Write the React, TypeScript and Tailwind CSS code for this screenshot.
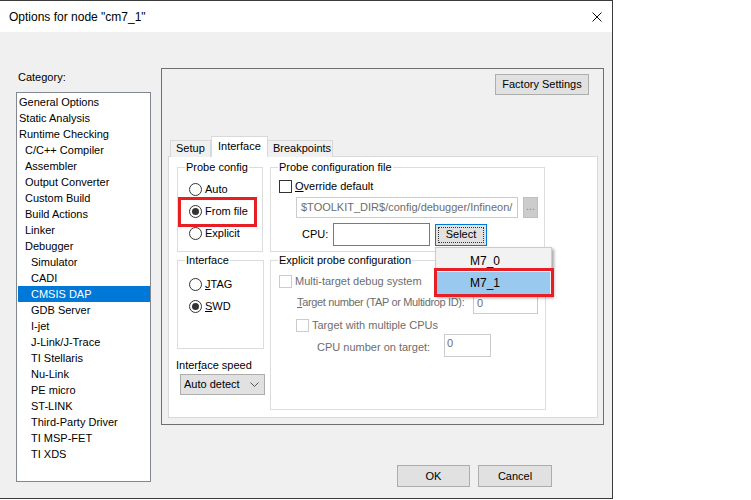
import type { ReactNode } from 'react'

const categories: [string, number][] = [
  ['General Options', 0],
  ['Static Analysis', 0],
  ['Runtime Checking', 0],
  ['C/C++ Compiler', 1],
  ['Assembler', 1],
  ['Output Converter', 1],
  ['Custom Build', 1],
  ['Build Actions', 1],
  ['Linker', 1],
  ['Debugger', 1],
  ['Simulator', 2],
  ['CADI', 2],
  ['CMSIS DAP', 2],
  ['GDB Server', 2],
  ['I-jet', 2],
  ['J-Link/J-Trace', 2],
  ['TI Stellaris', 2],
  ['Nu-Link', 2],
  ['PE micro', 2],
  ['ST-LINK', 2],
  ['Third-Party Driver', 2],
  ['TI MSP-FET', 2],
  ['TI XDS', 2],
]

const indent = ['pl-[1px]', 'pl-[7px]', 'pl-[13px]']

function Group({ title, className, children }: { title: string; className: string; children?: ReactNode }) {
  return (
    <div className={`relative border border-[#dcdcdc] ${className}`}>
      <span className="absolute left-[7px] -top-[7px] bg-white px-[1px] leading-[13px]">{title}</span>
      {children}
    </div>
  )
}

function Radio({ checked, children }: { checked?: boolean; children: ReactNode }) {
  return (
    <div className="flex h-[22px] items-center">
      <span className="flex h-[13px] w-[13px] items-center justify-center rounded-full border border-[#333] bg-white">
        {checked && <span className="h-[7px] w-[7px] rounded-full bg-[#333]" />}
      </span>
      <span className="ml-[3px] leading-[13px]">{children}</span>
    </div>
  )
}

function Check({ disabled, children }: { disabled?: boolean; children: ReactNode }) {
  return (
    <div className={`flex h-[16px] items-center ${disabled ? 'text-[#6d6d6d]' : ''}`}>
      <span className={`h-[13px] w-[13px] border bg-white ${disabled ? 'border-[#cccccc]' : 'border-[#333]'}`} />
      <span className="ml-[3px] whitespace-nowrap leading-[13px]">{children}</span>
    </div>
  )
}

function Btn({ className, children }: { className: string; children: ReactNode }) {
  return (
    <button type="button" className={`flex items-center justify-center border border-[#adadad] bg-[#e1e1e1] leading-[13px] ${className}`}>
      {children}
    </button>
  )
}

export default function App() {
  return (
    <div className="h-[500px] w-[751px] bg-white font-['Liberation_Sans',Arial,sans-serif] text-[11px] text-black">
      <div className="flex h-[499px] w-[613px] flex-col border-t border-r border-b border-[#3a3a3a]">
        {/* title bar */}
        <div className="flex h-[31px] shrink-0 items-center justify-between bg-white pl-[9px] pr-[10px]">
          <span className="text-[12px] leading-[16px]">Options for node "cm7_1"</span>
          <svg width="10" height="10" viewBox="0 0 10 10" className="mt-[1px]">
            <path d="M0.5 0.5 L9.5 9.5 M9.5 0.5 L0.5 9.5" stroke="#111" strokeWidth="1" fill="none" />
          </svg>
        </div>

        <div className="flex flex-1 bg-[#f0f0f0]">
          {/* category column */}
          <div className="ml-[16px] w-[135px] pt-[39px]">
            <div className="pl-[2px] leading-[13px]">Category:</div>
            <ul className="mt-[8px] h-[390px] border border-[#828790] bg-white pl-[1px] pt-[1px]">
              {categories.map(([name, level]) => (
                <li
                  key={name}
                  className={`h-[16px] leading-[16px] ${indent[level]} ${name === 'CMSIS DAP' ? 'bg-[#0078d7] text-white' : ''}`}
                >
                  {name}
                </li>
              ))}
            </ul>
          </div>

          {/* options panel */}
          <div className="ml-[10px] flex w-[443px] flex-col">
            <div className="mt-[36px] h-[357px] border border-[#6f6f6f]">
              <div className="flex justify-end pr-[14px] pt-[5px]">
                <Btn className="h-[21px] w-[94px]">Factory Settings</Btn>
              </div>

              <div className="relative z-10 ml-[8px] mt-[41px] flex h-[21px] items-end">
                <div className="h-[17px] w-[41px] border border-b-0 border-[#d9d9d9] bg-[#f0f0f0] pl-[5px] pt-[1px] leading-[13px]">Setup</div>
                <div className="h-[21px] w-[57px] border border-b-0 border-[#d9d9d9] bg-white pl-[6px] pt-[3px] leading-[13px]">Interface</div>
                <div className="h-[17px] w-[65px] border border-b-0 border-l-0 border-[#d9d9d9] bg-[#f0f0f0] pl-[5px] pt-[1px] leading-[13px]">Breakpoints</div>
              </div>

              {/* tab page */}
              <div className="-mt-px ml-[6px] flex h-[262px] w-[430px] border border-[#d9d9d9] bg-white pl-[8px] pt-[10px]">
                <div className="flex w-[87px] flex-col">
                  <Group title="Probe config" className="h-[85px] w-[86px] pl-[11px] pt-[10px]">
                    <Radio>Auto</Radio>
                    <Radio checked>From file</Radio>
                    <Radio>Explicit</Radio>
                    <div className="absolute left-0 top-[29px] h-[30px] w-[79px] border-[3px] border-[#e81e25]" />
                  </Group>
                  <Group title="Interface" className="mt-[8px] h-[89px] w-[87px] pl-[11px] pt-[12px]">
                    <Radio>
                      <span className="underline underline-offset-[1px]">J</span>TAG
                    </Radio>
                    <Radio checked>
                      <span className="underline underline-offset-[1px]">S</span>WD
                    </Radio>
                  </Group>
                  <div className="-ml-px mt-[10px] leading-[13px]">
                    Inter<span className="underline underline-offset-[1px]">f</span>ace speed
                  </div>
                  <div className="ml-[3px] mt-[2px] flex h-[21px] w-[85px] items-center justify-between border border-[#adadad] bg-[#e1e1e1] pl-[3px] pr-[5px]">
                    <span className="leading-[13px]">Auto detect</span>
                    <svg width="9" height="5" viewBox="0 0 9 5">
                      <path d="M0.5 0.5 L4.5 4.5 L8.5 0.5" stroke="#555" strokeWidth="1" fill="none" />
                    </svg>
                  </div>
                </div>

                <div className="ml-[6px] flex w-[276px] flex-col">
                  <Group title="Probe configuration file" className="h-[85px] w-[275px] pl-[8px] pt-[10px]">
                    <Check>
                      <span className="underline underline-offset-[1px]">O</span>verride default
                    </Check>
                    <div className="ml-[17px] mt-[3px] flex items-start">
                      <div className="flex h-[21px] w-[222px] items-center border border-[#cccccc] bg-white pl-[4px] text-[#6d6d6d]">
                        $TOOLKIT_DIR$/config/debugger/Infineon/
                      </div>
                      <div className="ml-[5px] flex h-[21px] w-[15px] items-center justify-center border border-[#bfbfbf] bg-[#cccccc] pb-[2px] text-[#8a8a8a]">
                        ...
                      </div>
                    </div>
                    <div className="ml-[23px] mt-[5px] flex items-center">
                      <span className="w-[31px] leading-[13px]">CPU:</span>
                      <div className="h-[23px] w-[97px] border border-[#7a7a7a] bg-white" />
                      <div className="relative ml-[5px]">
                        <button
                          type="button"
                          className="flex h-[22px] w-[52px] items-center justify-center border border-[#0078d7] bg-[#e1e1e1] p-[2px]"
                        >
                          <span className="flex h-full w-full items-center justify-center border border-dotted border-[#333] leading-[13px]">
                            Select
                          </span>
                        </button>
                        <div className="absolute left-0 top-[23px] z-20 h-[49px] w-[117px] border border-[#cccccc] bg-[#f2f2f2] px-[1px] pt-[2px] shadow-[2px_2px_3px_rgba(0,0,0,0.35)]">
                          <div className="flex h-[22px] items-center pl-[33px] text-[12px]">M7_0</div>
                          <div className="flex h-[22px] items-center bg-[#99c9ef] pl-[33px] text-[12px]">M7_1</div>
                          <div className="absolute -left-[2px] top-[20px] h-[29px] w-[120px] border-[3px] border-[#e81e25]" />
                        </div>
                      </div>
                    </div>
                  </Group>

                  <Group title="Explicit probe configuration" className="mt-[8px] h-[150px] w-[276px] pl-[8px] pt-[12px]">
                    <Check disabled>Multi-target debug system</Check>
                    <div className="ml-[18px] mt-[6px] flex items-start text-[#6d6d6d]">
                      <span className="mt-px w-[176px] whitespace-nowrap tracking-[-0.35px] leading-[13px]">
                        <span className="underline underline-offset-[1px]">T</span>arget number (TAP or Multidrop ID):
                      </span>
                      <div className="h-[19px] w-[65px] border border-[#cccccc] bg-white pl-[3px] leading-[15px]">0</div>
                    </div>
                    <div className="ml-[17px] mt-[3px]">
                      <Check disabled>Target with multiple CPUs</Check>
                    </div>
                    <div className="ml-[38px] mt-px flex items-start text-[#6d6d6d]">
                      <span className="mt-[7px] w-[127px] whitespace-nowrap leading-[13px]">CPU number on target:</span>
                      <div className="h-[23px] w-[47px] border border-[#cccccc] bg-white pl-[2px] pt-[2px] leading-[13px]">0</div>
                    </div>
                  </Group>
                </div>
              </div>
            </div>

            <div className="mt-[40px] flex justify-end gap-[8px] pr-[52px]">
              <Btn className="h-[22px] w-[73px]">OK</Btn>
              <Btn className="h-[22px] w-[74px]">Cancel</Btn>
            </div>
          </div>
        </div>
      </div>
    </div>
  )
}
